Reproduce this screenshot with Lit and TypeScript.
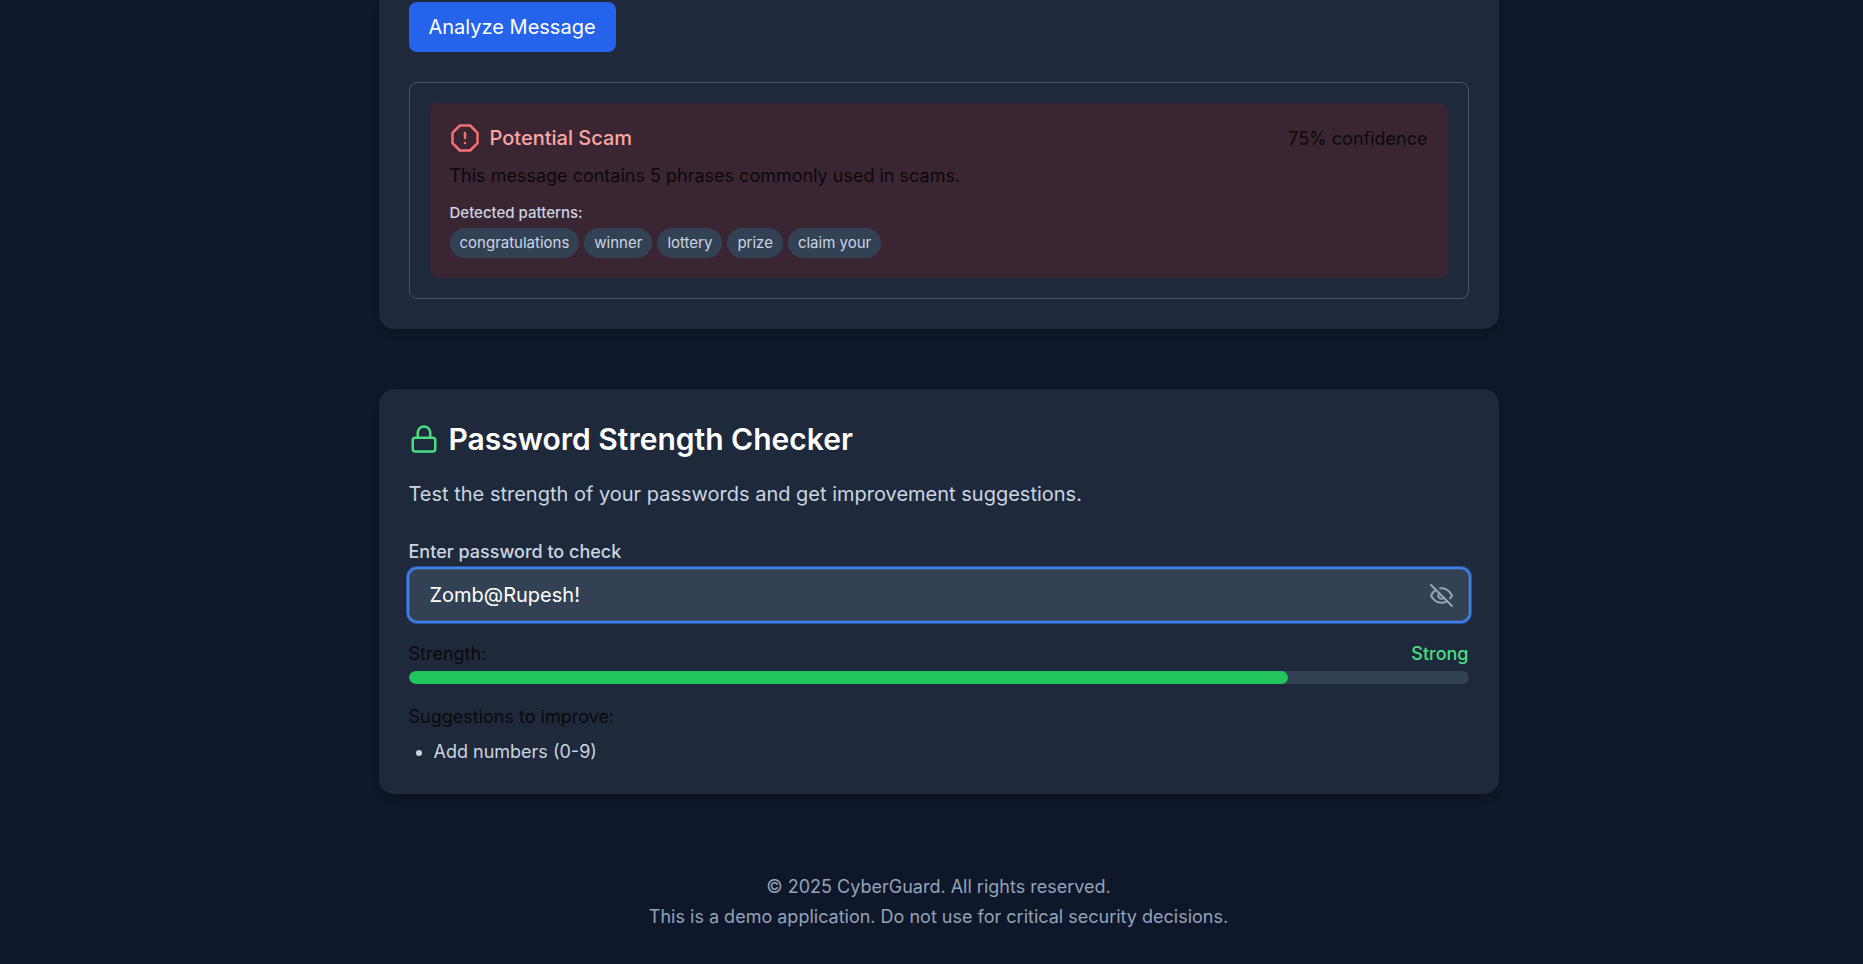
import { LitElement, html, css, svg } from "lit";
import { customElement, state } from "lit/decorators.js";

const icon = (paths: unknown, cls: string) => html`
  <svg class=${cls} viewBox="0 0 24 24" fill="none" stroke="currentColor" stroke-width="2"
    stroke-linecap="round" stroke-linejoin="round" aria-hidden="true">${paths}</svg>`;

const alertOctagon = svg`
  <path d="M7.86 2h8.28L22 7.86v8.28L16.14 22H7.86L2 16.14V7.86L7.86 2z"/>
  <path d="M12 8v4"/><path d="M12 16h.01"/>`;
const lock = svg`
  <rect width="18" height="11" x="3" y="11" rx="2" ry="2"/>
  <path d="M7 11V7a5 5 0 0 1 10 0v4"/>`;
const eyeOff = svg`
  <path d="M9.88 9.88a3 3 0 1 0 4.24 4.24"/>
  <path d="M10.73 5.08A10.43 10.43 0 0 1 12 5c7 0 10 7 10 7a13.16 13.16 0 0 1-1.67 2.68"/>
  <path d="M6.61 6.61A13.526 13.526 0 0 0 2 12s3 7 10 7a9.74 9.74 0 0 0 5.39-1.61"/>
  <path d="m2 2 20 20"/>`;
const eye = svg`
  <path d="M2 12s3-7 10-7 10 7 10 7-3 7-10 7-10-7-10-7Z"/>
  <circle cx="12" cy="12" r="3"/>`;

@customElement("app-root")
export class AppRoot extends LitElement {
  @state() private visible = true;
  private patterns = ["congratulations", "winner", "lottery", "prize", "claim your"];
  private score = 83;

  static styles = css`
    :host {
      display: block;
      box-sizing: border-box;
      min-height: 100vh;
      background: #0f172a;
      color: #0a0a0a;
      font-family: Inter, "Liberation Sans", sans-serif;
      font-size: 20px;
      line-height: 30px;
      padding-left: 14px;
    }
    * { box-sizing: border-box; }
    h2, h3, h4, p, ul { margin: 0; }
    button, input { font: inherit; border: 0; }
    main {
      max-width: 1120px;
      margin: 0 auto;
      display: flex;
      flex-direction: column;
      gap: 60px;
    }
    .card {
      background: #1e293b;
      border-radius: 15px;
      padding: 30px;
      box-shadow: 0 5px 8px -1px rgba(0, 0, 0, 0.1), 0 3px 5px -2px rgba(0, 0, 0, 0.1);
    }
    .card.continued {
      border-top-left-radius: 0;
      border-top-right-radius: 0;
      padding-top: 2px;
    }
    .small { font-size: 18px; line-height: 25px; }
    .analyze {
      display: block;
      background: #2563eb;
      color: #fff;
      padding: 10px 20px;
      border-radius: 8px;
      cursor: pointer;
    }
    .result {
      margin-top: 30px;
      border: 1px solid #475569;
      border-radius: 8px;
      padding: 20px;
    }
    .alert {
      background: rgba(127, 29, 29, 0.3);
      border-radius: 8px;
      padding: 20px;
    }
    .row { display: flex; align-items: center; justify-content: space-between; }
    .verdict {
      display: flex;
      align-items: center;
      gap: 10px;
      color: #fca5a5;
      font-size: 20px;
      font-weight: 500;
    }
    .icon { width: 30px; height: 30px; flex: none; display: block; }
    .red { color: #f87171; }
    .green { color: #4ade80; }
    .summary { margin-top: 10px; }
    .patterns-title {
      margin-top: 15px;
      color: #cbd5e1;
      font-size: 15px;
      line-height: 20px;
      font-weight: 500;
    }
    .chips {
      list-style: none;
      padding: 0;
      margin-top: 5px;
      display: flex;
      flex-wrap: wrap;
      gap: 5px;
    }
    .chip {
      background: #334155;
      color: #cbd5e1;
      font-size: 15px;
      line-height: 20px;
      padding: 5px 10px;
      border-radius: 15px;
    }
    .title {
      display: flex;
      align-items: center;
      gap: 10px;
      color: #fff;
      font-size: 30px;
      line-height: 40px;
      font-weight: 600;
    }
    .intro { margin-top: 20px; color: #cbd5e1; }
    .label {
      display: block;
      margin-top: 30px;
      color: #cbd5e1;
      font-weight: 500;
    }
    .field {
      margin-top: 5px;
      display: flex;
      align-items: center;
      background: #334155;
      border: 1px solid #475569;
      border-radius: 8px;
      box-shadow: 0 0 0 2px #3b82f6, 0 0 0 3px rgba(59, 130, 246, 0.5);
    }
    .password {
      flex: 1;
      min-width: 0;
      height: 50px;
      padding: 10px 20px;
      background: transparent;
      color: #fff;
      outline: none;
    }
    .toggle {
      background: none;
      color: #94a3b8;
      padding: 0 14px;
      cursor: pointer;
    }
    .toggle-icon { display: block; width: 25px; height: 25px; }
    .strength { margin-top: 20px; }
    .rating { font-weight: 500; color: #4ade80; }
    .track {
      margin-top: 5px;
      height: 13px;
      border-radius: 7px;
      background: #334155;
      overflow: hidden;
    }
    .fill { height: 100%; border-radius: 7px; background: #22c55e; }
    .suggest-title { margin-top: 20px; font-weight: 400; }
    .suggestions { margin-top: 10px; padding-left: 25px; color: #cbd5e1; }
    footer {
      padding: 80px 20px 35px;
      display: flex;
      flex-direction: column;
      gap: 5px;
      text-align: center;
      color: #94a3b8;
    }
  `;

  render() {
    return html`
      <main>
        <section class="card continued">
          <button class="analyze" type="button">Analyze Message</button>
          <div class="result">
            <div class="alert">
              <div class="row">
                <h3 class="verdict">${icon(alertOctagon, "icon red")}<span>Potential Scam</span></h3>
                <span class="small">75% confidence</span>
              </div>
              <p class="small summary">This message contains 5 phrases commonly used in scams.</p>
              <h4 class="patterns-title">Detected patterns:</h4>
              <ul class="chips">${this.patterns.map((p) => html`<li class="chip">${p}</li>`)}</ul>
            </div>
          </div>
        </section>

        <section class="card">
          <h2 class="title">${icon(lock, "icon green")}<span>Password Strength Checker</span></h2>
          <p class="intro">Test the strength of your passwords and get improvement suggestions.</p>
          <label class="small label" for="password">Enter password to check</label>
          <div class="field">
            <input class="password" id="password" type=${this.visible ? "text" : "password"}
              value="Zomb@Rupesh!" autocomplete="off" spellcheck="false" />
            <button class="toggle" type="button"
              aria-label=${this.visible ? "Hide password" : "Show password"}
              @click=${() => (this.visible = !this.visible)}>
              ${icon(this.visible ? eyeOff : eye, "toggle-icon")}
            </button>
          </div>
          <div class="row small strength">
            <span>Strength:</span><span class="rating">Strong</span>
          </div>
          <div class="track"><div class="fill" style="width: ${this.score}%"></div></div>
          <h3 class="small suggest-title">Suggestions to improve:</h3>
          <ul class="small suggestions"><li>Add numbers (0-9)</li></ul>
        </section>
      </main>
      <footer class="small">
        <p>© 2025 CyberGuard. All rights reserved.</p>
        <p>This is a demo application. Do not use for critical security decisions.</p>
      </footer>
    `;
  }
}
